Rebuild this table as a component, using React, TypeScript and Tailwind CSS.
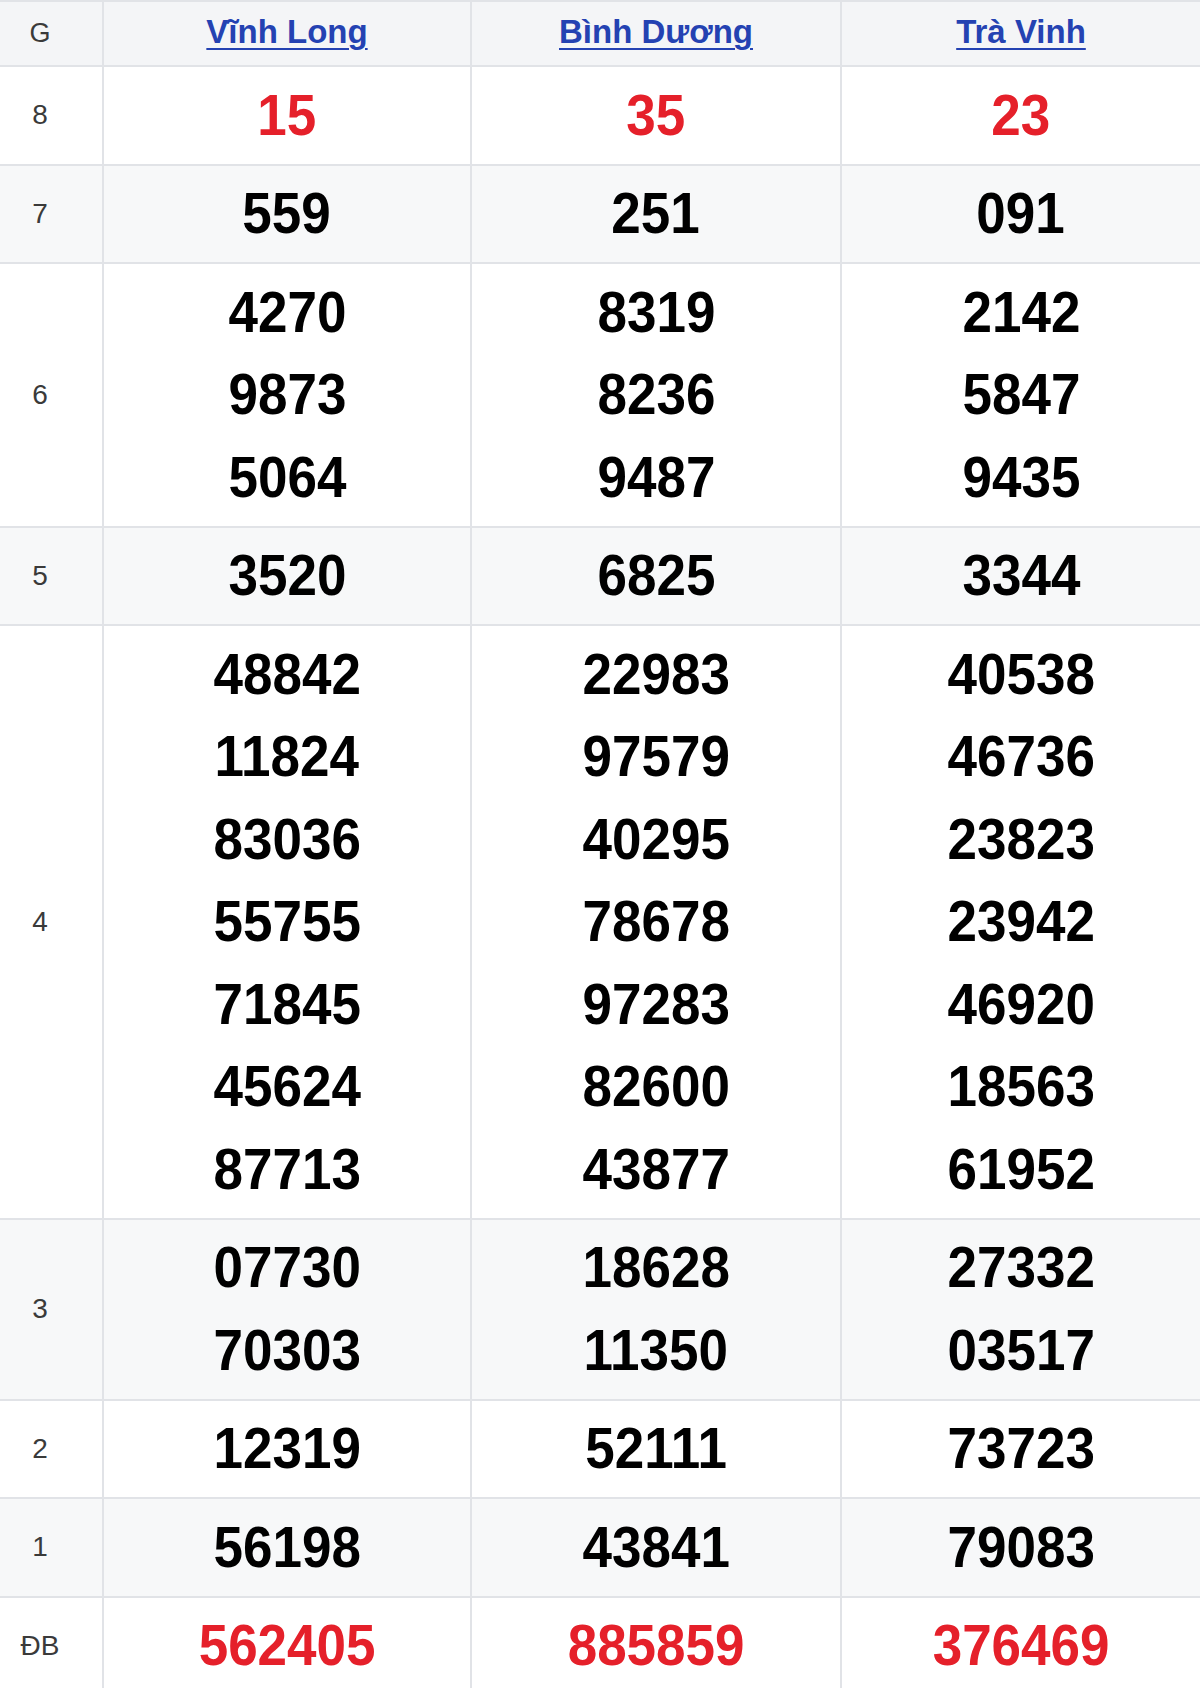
import React from 'react';

type Prize = { label: string; values: string[][]; red?: boolean };

const PROVINCES = ['Vĩnh Long', 'Bình Dương', 'Trà Vinh'];

const PRIZES: Prize[] = [
  { label: '8', values: [['15'], ['35'], ['23']], red: true },
  { label: '7', values: [['559'], ['251'], ['091']] },
  {
    label: '6',
    values: [
      ['4270', '9873', '5064'],
      ['8319', '8236', '9487'],
      ['2142', '5847', '9435'],
    ],
  },
  { label: '5', values: [['3520'], ['6825'], ['3344']] },
  {
    label: '4',
    values: [
      ['48842', '11824', '83036', '55755', '71845', '45624', '87713'],
      ['22983', '97579', '40295', '78678', '97283', '82600', '43877'],
      ['40538', '46736', '23823', '23942', '46920', '18563', '61952'],
    ],
  },
  {
    label: '3',
    values: [
      ['07730', '70303'],
      ['18628', '11350'],
      ['27332', '03517'],
    ],
  },
  { label: '2', values: [['12319'], ['52111'], ['73723']] },
  { label: '1', values: [['56198'], ['43841'], ['79083']] },
  { label: 'ĐB', values: [['562405'], ['885859'], ['376469']], red: true },
];

const COL_W = ['w-[368px] border-r-2', 'w-[370px] border-r-2', 'flex-1'];

export default function App() {
  return (
    <div
      className="w-[1200px] bg-white border-t-2 border-[#e1e3e7]"
      style={{ fontFamily: '"Liberation Sans", Arial, sans-serif' }}
    >
      {/* Header */}
      <div className="flex h-[65px] bg-[#f4f5f7] border-b-2 border-[#e1e3e7]">
        <div className="w-[104px] border-r-2 border-[#e1e3e7] flex items-center justify-center pr-[22px] text-[27px] text-[#3a3a3a]">
          G
        </div>
        {PROVINCES.map((p, i) => (
          <div
            key={p}
            className={`${COL_W[i]} border-[#e1e3e7] flex items-center justify-center pb-[4px]`}
          >
            <a
              href="#"
              className="text-[33px] font-bold text-[#2442b2] underline underline-offset-[5px] decoration-2"
            >
              {p}
            </a>
          </div>
        ))}
      </div>

      {/* Rows */}
      {PRIZES.map((prize, r) => (
        <div
          key={prize.label}
          className={`flex border-b-2 border-[#e1e3e7] ${r % 2 === 1 ? 'bg-[#f7f8f9]' : 'bg-white'}`}
        >
          <div className="w-[104px] border-r-2 border-[#e1e3e7] flex items-center justify-center pr-[22px] text-[28px] text-[#3a3a3a]">
            {prize.label}
          </div>
          {prize.values.map((col, i) => (
            <div
              key={i}
              className={`${COL_W[i]} border-[#e1e3e7] flex flex-col items-center py-[7px]`}
            >
              {col.map((v) => (
                <div
                  key={v}
                  className={`h-[82.5px] flex items-center text-[57px] font-bold scale-x-[0.93] ${
                    prize.red ? 'text-[#e5202a]' : 'text-black'
                  }`}
                >
                  {v}
                </div>
              ))}
            </div>
          ))}
        </div>
      ))}
    </div>
  );
}
